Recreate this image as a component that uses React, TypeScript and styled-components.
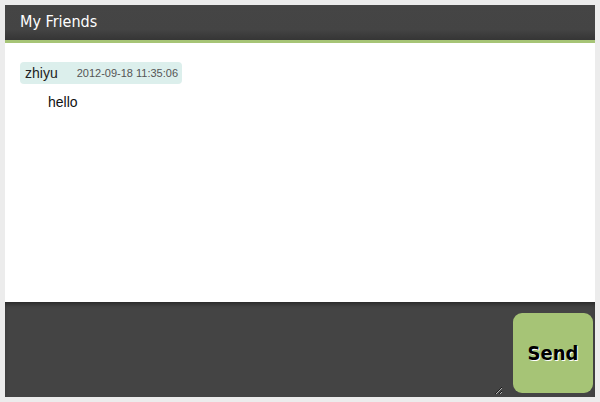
import React from "react";
import styled, { createGlobalStyle } from "styled-components";

const Global = createGlobalStyle`
  html, body { margin: 0; padding: 0; background: #ececec; }
  body { font-family: "Liberation Sans", Arial, sans-serif; }
  * { box-sizing: border-box; }
`;

const Page = styled.div`
  padding: 5px;
  width: 600px;
  height: 402px;
`;

const Panel = styled.div`
  display: flex;
  flex-direction: column;
  height: 392px;
  background: #fff;
`;

const Header = styled.div`
  height: 38px;
  background: linear-gradient(to bottom, #454545 0%, #444 70%, #353535 100%);
  border-bottom: 3px solid #a6c476;
  display: flex;
  align-items: center;
  padding: 0 15px 2px;
  color: #fff;
  font-family: "DejaVu Sans Condensed", "DejaVu Sans", sans-serif;
  font-size: 16px;
`;

const Messages = styled.div`
  flex: 1;
  padding: 19px 15px;
`;

const Meta = styled.div`
  display: inline-flex;
  align-items: center;
  height: 22px;
  background: #dcefec;
  border-radius: 4px;
  padding: 0 4px 0 5px;
  gap: 19px;
  font-family: "Liberation Sans", Arial, sans-serif;
`;

const Name = styled.span`
  font-family: "Liberation Sans", Arial, sans-serif;
  font-size: 14px;
  color: #222;
`;

const Time = styled.span`
  font-family: "Liberation Sans", Arial, sans-serif;
  font-size: 11px;
  color: #555;
`;

const Body = styled.div`
  font-family: "Liberation Sans", Arial, sans-serif;
  font-size: 14px;
  line-height: 16px;
  color: #111;
  padding: 10px 0 0 28px;
`;

const Composer = styled.div`
  height: 95px;
  background: #444;
  box-shadow: inset 0 4px 5px -2px rgba(0, 0, 0, 0.45);
  display: flex;
  align-items: flex-end;
  padding: 0 2px 3px 0;
`;

const Input = styled.textarea`
  flex: 1;
  height: 92px;
  margin-right: 10px;
  margin-bottom: -1px;
  background: transparent;
  border: none;
  outline: none;
  color: #fff;
  resize: both;
`;

const SendButton = styled.button`
  width: 80px;
  height: 80px;
  border: none;
  border-radius: 9px;
  background: #a6c476;
  color: #000;
  font-family: "DejaVu Sans Condensed", "DejaVu Sans", sans-serif;
  font-weight: bold;
  font-size: 20px;
  text-shadow: 1px 1px 0 #fff;
  padding: 0;
  margin-bottom: 1px;
  cursor: pointer;
`;

export default function App() {
  return (
    <>
      <Global />
      <Page>
        <Panel>
          <Header>My Friends</Header>
          <Messages>
            <Meta>
              <Name>zhiyu</Name>
              <Time>2012-09-18 11:35:06</Time>
            </Meta>
            <Body>hello</Body>
          </Messages>
          <Composer>
            <Input />
            <SendButton>Send</SendButton>
          </Composer>
        </Panel>
      </Page>
    </>
  );
}
